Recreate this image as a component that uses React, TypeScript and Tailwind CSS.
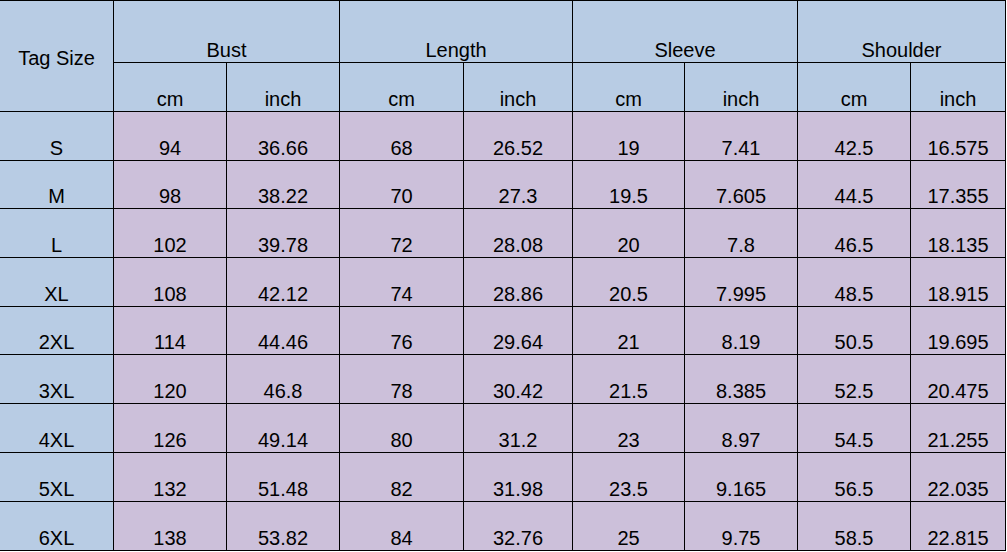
import React from "react";

const rows: string[][] = [
  ["S", "94", "36.66", "68", "26.52", "19", "7.41", "42.5", "16.575"],
  ["M", "98", "38.22", "70", "27.3", "19.5", "7.605", "44.5", "17.355"],
  ["L", "102", "39.78", "72", "28.08", "20", "7.8", "46.5", "18.135"],
  ["XL", "108", "42.12", "74", "28.86", "20.5", "7.995", "48.5", "18.915"],
  ["2XL", "114", "44.46", "76", "29.64", "21", "8.19", "50.5", "19.695"],
  ["3XL", "120", "46.8", "78", "30.42", "21.5", "8.385", "52.5", "20.475"],
  ["4XL", "126", "49.14", "80", "31.2", "23", "8.97", "54.5", "21.255"],
  ["5XL", "132", "51.48", "82", "31.98", "23.5", "9.165", "56.5", "22.035"],
  ["6XL", "138", "53.82", "84", "32.76", "25", "9.75", "58.5", "22.815"],
];

const cell = "border-r border-b border-black flex justify-center items-end";
const blue = "bg-[#b8cce4]";
const purple = "bg-[#ccc0da]";

export default function App() {
  return (
    <div className="w-[1007px] h-[552px] bg-white font-['Liberation_Sans',Arial,sans-serif] text-[20px] leading-[23px] text-black">
      <div className="grid grid-cols-[114px_113px_113px_124px_109px_112px_113px_113px_95px] grid-rows-[62px_49px_49px_48px_49px_49px_48px_49px_49px_49px_49px] border-t border-black w-[1006px]">
        {/* header */}
        <div className={`${cell} ${blue} row-span-2 !items-center pt-[5px]`}>Tag Size</div>
        <div className={`${cell} ${blue} col-span-2`}>Bust</div>
        <div className={`${cell} ${blue} col-span-2`}>Length</div>
        <div className={`${cell} ${blue} col-span-2`}>Sleeve</div>
        <div className={`${cell} ${blue} col-span-2`}>Shoulder</div>
        {["cm", "inch", "cm", "inch", "cm", "inch", "cm", "inch"].map((u, i) => (
          <div key={i} className={`${cell} ${blue}`}>
            {u}
          </div>
        ))}

        {/* data */}
        {rows.map((r, ri) =>
          r.map((v, ci) => (
            <div key={`${ri}-${ci}`} className={`${cell} ${ci === 0 ? blue : purple}`}>
              {v}
            </div>
          ))
        )}
      </div>
    </div>
  );
}
